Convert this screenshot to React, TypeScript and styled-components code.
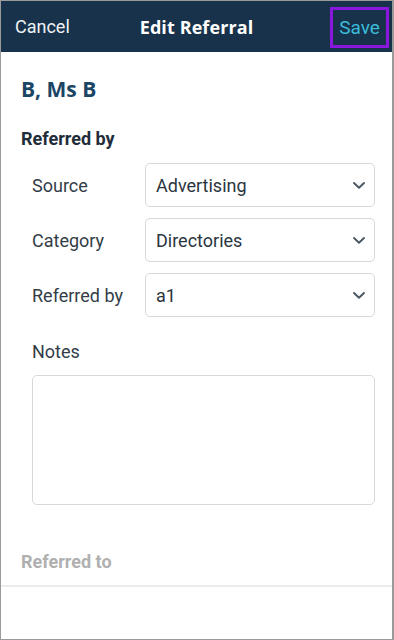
import React from 'react'
import styled, { createGlobalStyle } from 'styled-components'

const GlobalStyle = createGlobalStyle`
  html, body {
    margin: 0;
    padding: 0;
    background: #ffffff;
  }
  * {
    box-sizing: border-box;
  }
`

const Chevron = () => (
  <svg width="14" height="9" viewBox="0 0 14 9">
    <path d="M2 2 L7 6.8 L12 2" fill="none" stroke="#4a5661" strokeWidth="1.9" strokeLinecap="round" strokeLinejoin="round" />
  </svg>
)

const selects = [
  { label: 'Source', value: 'Advertising' },
  { label: 'Category', value: 'Directories' },
  { label: 'Referred by', value: 'a1' },
]

const App = () => {
  return (
    <>
      <GlobalStyle />
      <Frame>
        <Header>
          <HeaderSide>
            <HeaderButton>Cancel</HeaderButton>
          </HeaderSide>
          <Title>Edit Referral</Title>
          <HeaderSide right>
            <SaveButton>Save</SaveButton>
          </HeaderSide>
        </Header>
        <Body>
          <PatientName>B, Ms B</PatientName>
          <SectionTitle>Referred by</SectionTitle>
          <Fields>
            {selects.map((s) => (
              <FieldRow key={s.label}>
                <FieldLabel>{s.label}</FieldLabel>
                <Select>
                  <span>{s.value}</span>
                  <Chevron />
                </Select>
              </FieldRow>
            ))}
          </Fields>
          <NotesLabel>Notes</NotesLabel>
          <NotesBox />
          <SectionTitle muted>Referred to</SectionTitle>
        </Body>
        <Divider />
      </Frame>
    </>
  )
}

export default App

const Frame = styled.div`
  width: 394px;
  height: 640px;
  border: 1px solid #9a9a9a;
  border-right-width: 2px;
  background: #ffffff;
  display: flex;
  flex-direction: column;
  overflow: hidden;
  font-family: Roboto, 'Liberation Sans', sans-serif;
`

const Header = styled.div`
  height: 51px;
  background: #17324a;
  display: flex;
  align-items: center;
  padding: 0 3px;
  flex-shrink: 0;
`

const HeaderSide = styled.div<{ right?: boolean }>`
  flex: 1;
  display: flex;
  justify-content: ${(p) => (p.right ? 'flex-end' : 'flex-start')};
`

const HeaderButton = styled.span`
  color: #eef2f5;
  font-size: 18px;
  margin-left: 11px;
`

const Title = styled.span`
  color: #ffffff;
  font-family: 'Open Sans', 'DejaVu Sans', sans-serif;
  font-weight: 700;
  font-size: 18px;
  letter-spacing: 0.1px;
`

const SaveButton = styled.span`
  width: 59px;
  height: 41px;
  border: 3px solid #8b17df;
  color: #3cbcd9;
  font-size: 19px;
  display: flex;
  align-items: center;
  justify-content: center;
  margin-top: 1px;
`

const Body = styled.div`
  padding: 24px 17px 0 20px;
  display: flex;
  flex-direction: column;
`

const PatientName = styled.h1`
  margin: 0;
  font-family: 'Open Sans', 'DejaVu Sans', sans-serif;
  font-weight: 700;
  font-size: 21px;
  line-height: 26px;
  color: #1b4563;
`

const SectionTitle = styled.h2<{ muted?: boolean }>`
  margin: ${(p) => (p.muted ? '46px 0 0' : '26px 0 0')};
  font-size: 18px;
  line-height: 22px;
  font-weight: 700;
  color: ${(p) => (p.muted ? '#b0b0b0' : '#1f2d3a')};
`

const Fields = styled.div`
  display: flex;
  flex-direction: column;
  gap: 11px;
  margin-top: 13px;
`

const FieldRow = styled.div`
  display: flex;
  align-items: center;
  padding-left: 11px;
`

const FieldLabel = styled.span`
  width: 113px;
  font-size: 18px;
  color: #333d47;
`

const Select = styled.div`
  flex: 1;
  height: 44px;
  border: 1px solid #d4d9de;
  border-radius: 5px;
  display: flex;
  align-items: center;
  justify-content: space-between;
  padding: 0 8px 0 10px;
  font-size: 18px;
  color: #2a3540;
`

const NotesLabel = styled.span`
  margin: 24px 0 0 11px;
  font-size: 18px;
  line-height: 22px;
  color: #333d47;
`

const NotesBox = styled.div`
  margin: 12px 0 0 11px;
  height: 130px;
  border: 1px solid #d4d9de;
  border-radius: 5px;
`

const Divider = styled.div`
  margin-top: 12px;
  height: 2px;
  background: #ececec;
`
